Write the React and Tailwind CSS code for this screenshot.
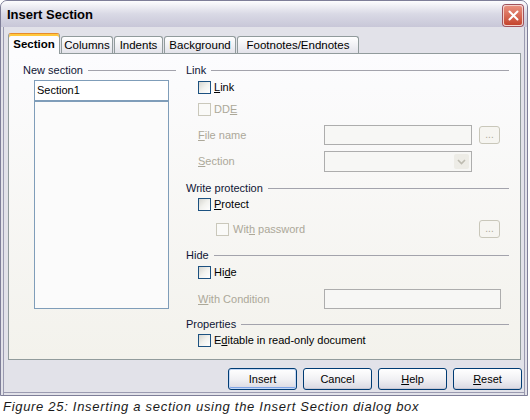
import React from 'react';

function Mn({ text, at = -1 }) {
  if (at < 0) return text;
  return (
    <>
      {text.slice(0, at)}
      <span className="underline underline-offset-[1px]">{text[at]}</span>
      {text.slice(at + 1)}
    </>
  );
}

function Box({ disabled }) {
  return disabled ? (
    <span className="block h-[13px] w-[13px] shrink-0 border border-[#CAC8BB] bg-[#FAFAF8]" />
  ) : (
    <span className="block h-[13px] w-[13px] shrink-0 border border-[#1C5180] bg-linear-to-br from-[#D6D6D0] via-[#F2F2EE] to-white" />
  );
}

function Check({ label, at, disabled, indent = 'pl-[12px]', className = '' }) {
  return (
    <div className={`flex h-[13px] items-center ${indent} ${className}`}>
      <Box disabled={disabled} />
      <span className={`ml-[3px] ${disabled ? 'text-[#ACA899]' : 'text-black'}`}>
        <Mn text={label} at={at} />
      </span>
    </div>
  );
}

function Group({ title, className = '' }) {
  return (
    <div className={`flex h-[14px] items-center gap-[5px] text-[#0F1535] ${className}`}>
      <span>{title}</span>
      <div className="h-px flex-1 bg-[#A3A3AC]" />
    </div>
  );
}

function Dots() {
  return (
    <div className="flex h-[18px] w-[21px] items-end justify-center rounded-[3px] border border-[#C9C7BA] bg-[#F6F5F1] pb-[3px] text-[10px] leading-none text-[#ACA899]">
      ...
    </div>
  );
}

function Field({ className = '' }) {
  return <div className={`h-[20px] border border-[#ADADAD] bg-[#F7F7F5] ${className}`} />;
}

function Tab({ label, w, active }) {
  if (active) {
    return (
      <div
        className={`relative z-10 -mb-px flex h-[21px] ${w} items-start justify-center rounded-t-[3px] border border-b-0 border-[#919B9C] border-t-[#E68B2C] bg-[#FCFCFE] pt-[5px] text-[11.5px] font-bold shadow-[inset_0_2px_0_#FFC83C]`}
      >
        {label}
      </div>
    );
  }
  return (
    <div
      className={`flex h-[17px] ${w} items-center justify-center rounded-t-[3px] border border-b-0 border-[#919B9C] bg-linear-to-b from-white to-[#E3E3EA] pt-px text-[11.5px]`}
    >
      {label}
    </div>
  );
}

function Button({ label, at, primary }) {
  return (
    <div
      className={`flex h-[22px] w-[69px] items-center justify-center rounded-[3px] border border-[#003C74] bg-linear-to-b from-white via-[#F1F1F4] to-[#D9D8E2] text-black ${
        primary ? 'shadow-[inset_0_0_0_1px_#C4D8F6,inset_0_-2px_0_#7FA4E6]' : 'shadow-[inset_0_-1px_0_#C8C8D4]'
      }`}
    >
      <Mn text={label} at={at} />
    </div>
  );
}

export default function App() {
  return (
    <div className="h-[420px] w-[530px] bg-white text-[11px] leading-none text-black [font-family:'Liberation_Sans',Arial,sans-serif]">
      <div className="flex h-[396px] w-[528px] flex-col rounded-t-[7px] border border-[#7E7E98] bg-[#E2E2E9] shadow-[inset_2px_0_0_#E2E2E9,inset_3px_0_0_#9A9AB0,inset_-2px_0_0_#E2E2E9,inset_-3px_0_0_#9A9AB0,inset_0_-2px_0_#E2E2E9,inset_0_-3px_0_#9A9AB0]">
        <div className="flex h-[26px] items-center justify-between rounded-t-[6px] bg-linear-to-b from-[#FDFDFE] via-[#D9D9E5] to-[#C8C7D8] pl-[6px] pr-[4px]">
          <span className="text-[13px] font-bold text-black">Insert Section</span>
          <div className="mt-[2px] flex h-[21px] w-[20px] items-center justify-center rounded-[3px] border border-[#F4D0C8] bg-linear-to-b from-[#E9907E] to-[#C4432C] shadow-[0_0_0_1px_#A0525C]">
            <svg width="11" height="11" viewBox="0 0 11 11">
              <path d="M1.5 1.5L9.5 9.5M9.5 1.5L1.5 9.5" stroke="white" strokeWidth="2" strokeLinecap="round" />
            </svg>
          </div>
        </div>

        <div className="flex flex-1 flex-col pl-[7px] pr-[5px]">
          <div className="mt-[6px] flex h-[20px] items-end gap-px">
            <Tab label="Section" w="w-[52px]" active />
            <Tab label="Columns" w="w-[52px]" />
            <Tab label="Indents" w="w-[49px]" />
            <Tab label="Background" w="w-[72px]" />
            <Tab label="Footnotes/Endnotes" w="w-[122px]" />
          </div>

          <div className="grid h-[307px] w-[513px] grid-cols-[153px_1fr] gap-[10px] border border-[#919B9C] bg-linear-to-b from-[#FCFCFE] to-[#F3F2EC] pl-[14px] pr-[11px] pt-[9px]">
            <div className="flex flex-col">
              <Group title="New section" />
              <div className="ml-[11px] mt-[3px] w-[135px]">
                <div className="flex h-[21px] items-center border border-[#7F9DB9] bg-white pl-[2px]">Section1</div>
                <div className="h-[208px] border border-[#7F9DB9] bg-[#FBFBFB]" />
              </div>
            </div>

            <div className="flex flex-col">
              <Group title="Link" />
              <Check label="Link" at={0} className="mt-[4px]" />
              <Check label="DDE" at={2} disabled className="mt-[9px]" />

              <div className="mt-[9px] flex h-[20px] items-center pl-[12px] text-[#ACA899]">
                <span className="w-[126px]">
                  <Mn text="File name" at={0} />
                </span>
                <Field className="w-[148px]" />
                <div className="ml-[7px]">
                  <Dots />
                </div>
              </div>

              <div className="mt-[6px] flex h-[21px] items-center pl-[12px] text-[#ACA899]">
                <span className="w-[126px]">
                  <Mn text="Section" at={0} />
                </span>
                <div className="flex h-[21px] w-[148px] items-center justify-end border border-[#ADADAD] bg-[#F7F7F5] pr-[2px]">
                  <div className="flex h-[15px] w-[15px] items-center justify-center rounded-[2px] bg-[#EDECE6]">
                    <svg width="9" height="6" viewBox="0 0 9 6">
                      <path d="M1 1L4.5 4.5L8 1" fill="none" stroke="#BDBBB0" strokeWidth="1.6" />
                    </svg>
                  </div>
                </div>
              </div>

              <Group title="Write protection" className="mt-[9px]" />
              <Check label="Protect" at={0} className="mt-[3px]" />
              <div className="mt-[9px] flex h-[18px] items-center pl-[30px]">
                <Box disabled />
                <span className="ml-[4px] text-[#ACA899]">
                  <Mn text="With password" at={3} />
                </span>
                <div className="ml-auto mr-[9px]">
                  <Dots />
                </div>
              </div>

              <Group title="Hide" className="mt-[10px]" />
              <Check label="Hide" at={2} className="mt-[4px]" />
              <div className="mt-[10px] flex h-[20px] items-center pl-[12px] text-[#ACA899]">
                <span className="w-[126px]">
                  <Mn text="With Condition" at={0} />
                </span>
                <Field className="w-[177px]" />
              </div>

              <Group title="Properties" className="mt-[8px]" />
              <Check label="Editable in read-only document" at={1} className="mt-[3px]" />
            </div>
          </div>

          <div className="mt-[8px] flex justify-end gap-[6px]">
            <Button label="Insert" primary />
            <Button label="Cancel" />
            <Button label="Help" at={0} />
            <Button label="Reset" at={0} />
          </div>
        </div>
      </div>
      <div className="pl-[3px] pt-[3px] text-[13px] italic leading-[16px] tracking-[0.7px] text-[#1A1A1A]">
        Figure 25: Inserting a section using the Insert Section dialog box
      </div>
    </div>
  );
}
